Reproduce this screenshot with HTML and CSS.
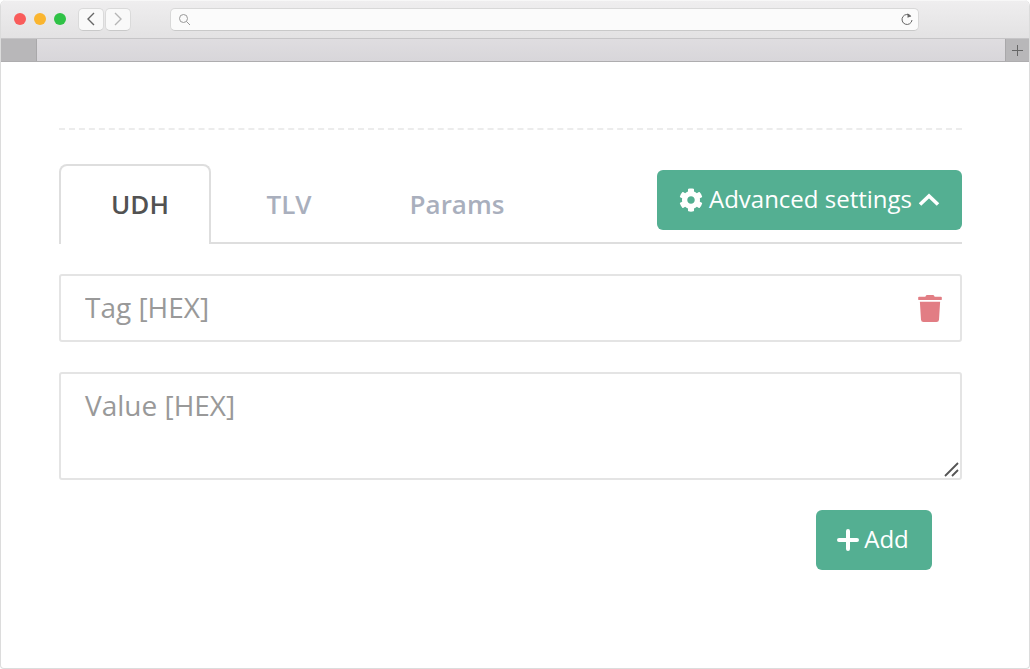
FILE: index.html
```html
<!DOCTYPE html>
<html lang="en">
<head>
<meta charset="utf-8">
<title>Advanced settings</title>
<link rel="stylesheet" href="styles.css">
</head>
<body>
<div class="window">
  <header class="toolbar">
    <div class="lights"><span class="light red"></span><span class="light yellow"></span><span class="light green"></span></div>
    <div class="nav">
      <span class="nav-btn"><svg width="10" height="16" viewBox="0 0 10 16"><path d="M8 2 2 8l6 6" fill="none" stroke="#666" stroke-width="1.400"/></svg></span>
      <span class="nav-btn"><svg width="10" height="16" viewBox="0 0 10 16"><path d="m2 2 6 6-6 6" fill="none" stroke="#b5b5b5" stroke-width="1.400"/></svg></span>
    </div>
    <div class="address">
      <svg width="13" height="13" viewBox="0 0 13 13"><circle cx="5.500" cy="5.500" r="4" fill="none" stroke="#999" stroke-width="1"/><path d="m8.500 8.500 3.500 3.500" stroke="#999" stroke-width="1"/></svg>
      <svg width="14" height="15" viewBox="0 0 14 15"><path d="M10.800 4.200A5 5 0 1 0 12 8" fill="none" stroke="#666" stroke-width="1"/><path d="M7.500 1.200l3.800 3-3.800 1.600z" fill="#666"/></svg>
    </div>
  </header>
  <div class="tabbar">
    <span class="tab-stub"></span>
    <span class="tab-add"><svg width="11" height="11" viewBox="0 0 11 11"><path d="M5.500 0v11M0 5.500h11" stroke="#666" stroke-width="1"/></svg></span>
  </div>
  <main class="content">
    <div class="dashed"></div>
    <div class="tabs-row">
      <nav class="tabs">
        <a class="tab active">UDH</a>
        <a class="tab tlv">TLV</a>
        <a class="tab params">Params</a>
      </nav>
      <button class="btn btn-advanced" type="button">
        <svg class="icon-gear" width="24" height="24" viewBox="0 0 512 512"><path fill="#fff" d="M487.400 315.700l-42.600-24.600c4.300-23.200 4.300-47 0-70.200l42.600-24.600c4.900-2.800 7.100-8.600 5.500-14-11.100-35.600-30-67.800-54.700-94.600-3.800-4.100-10-5.100-14.800-2.300L380.800 110c-17.900-15.400-38.500-27.300-60.800-35.100V25.800c0-5.600-3.900-10.500-9.400-11.700-36.700-8.200-74.300-7.800-109.200 0-5.500 1.200-9.400 6.100-9.400 11.700V75c-22.200 7.900-42.800 19.800-60.800 35.100L88.700 85.500c-4.900-2.800-11-1.900-14.800 2.300-24.700 26.700-43.600 58.900-54.700 94.600-1.700 5.400.6 11.200 5.500 14L67.300 221c-4.300 23.200-4.300 47 0 70.200l-42.600 24.600c-4.900 2.800-7.100 8.600-5.500 14 11.100 35.600 30 67.800 54.700 94.600 3.800 4.100 10 5.100 14.800 2.300l42.600-24.600c17.900 15.400 38.500 27.300 60.800 35.100v49.200c0 5.600 3.900 10.500 9.400 11.700 36.700 8.200 74.300 7.800 109.200 0 5.500-1.200 9.400-6.100 9.400-11.700v-49.200c22.200-7.900 42.800-19.800 60.800-35.100l42.600 24.600c4.900 2.800 11 1.900 14.800-2.300 24.700-26.700 43.600-58.900 54.700-94.600 1.500-5.500-.7-11.300-5.600-14.100zM256 336c-44.100 0-80-35.900-80-80s35.900-80 80-80 80 35.900 80 80-35.900 80-80 80z"/></svg>
        <span class="btn-label">Advanced settings</span>
        <svg width="22" height="14" viewBox="0 0 22 14"><path d="M2 11.500 11 3l9 8.500" fill="none" stroke="#fff" stroke-width="3.600"/></svg>
      </button>
    </div>
    <div class="field-wrap">
      <input class="field" type="text" placeholder="Tag [HEX]">
      <svg class="trash" width="24" height="27" viewBox="0 0 448 512"><path fill="#e27d84" d="M432 32H312l-9.400-18.700A24 24 0 0 0 281.100 0H166.800a23.720 23.720 0 0 0-21.400 13.300L136 32H16A16 16 0 0 0 0 48v32a16 16 0 0 0 16 16h416a16 16 0 0 0 16-16V48a16 16 0 0 0-16-16zM53.200 467a48 48 0 0 0 47.900 45h245.800a48 48 0 0 0 47.900-45L416 128H32z"/></svg>
    </div>
    <div class="area-wrap">
      <textarea class="area" placeholder="Value [HEX]"></textarea>
      <svg class="grip" width="15" height="15" viewBox="0 0 15 15"><path d="M1 14 14 1M8 14l6-6" stroke="#555" stroke-width="1.800"/></svg>
    </div>
    <div class="actions">
      <button class="btn btn-add" type="button">
        <svg width="22" height="22" viewBox="0 0 22 22"><path d="M11 2v18M2 11h18" stroke="#fff" stroke-width="4" stroke-linecap="round"/></svg>
        <span class="btn-label">Add</span>
      </button>
    </div>
  </main>
</div>
</body>
</html>
```
FILE: styles.css
```css
* { box-sizing: border-box; }
html, body { margin: 0; height: 100%; }
body { background: #fff; font-family: "Open Sans", "Liberation Sans", sans-serif; overflow: hidden; }
.window { width: 1030px; height: 669px; display: flex; flex-direction: column; background: #fff; border: 1px solid #dcdcdc; border-top: 0; border-radius: 6px 6px 4px 4px; overflow: hidden; }
.toolbar { height: 39px; flex: none; display: flex; align-items: center; padding: 0 110px 0 13px; background: linear-gradient(#efeeef, #e3e2e3); border-bottom: 1px solid #c6c5c7; box-shadow: inset 0 1px #f7f7f7; }
.lights { display: flex; gap: 8px; }
.light { width: 12px; height: 12px; border-radius: 50%; }
.red { background: #f95c5b; }
.yellow { background: #fab52f; }
.green { background: #2fc246; }
.nav { display: flex; margin-left: 12px; gap: 1px; }
.nav-btn { width: 26px; height: 23px; display: flex; align-items: center; justify-content: center; background: #f9f9f9; border: 1px solid #dadada; border-bottom-color: #c9c9c9; border-radius: 5px; }
.address { width: 750px; height: 23px; margin-left: 39px; display: flex; align-items: center; justify-content: space-between; padding: 0 4px 0 7px; background: #fbfbfb; border: 1px solid #d8d8d8; border-bottom-color: #c9c9c9; border-radius: 5px; }
.tabbar { height: 23px; flex: none; display: flex; justify-content: space-between; background: linear-gradient(#dfdde0, #d8d6da); border-bottom: 1px solid #aeadaf; }
.tab-stub { width: 36px; background: #b8b7b9; border-right: 1px solid #a9a8aa; }
.tab-add { width: 24px; display: flex; align-items: center; justify-content: center; background: #b8b7b9; border-left: 1px solid #a9a8aa; }
.content { flex: 1; padding: 66px 67px 0 58px; }
.dashed { border-top: 2px dashed #ececec; height: 2px; }
.tabs-row { margin-top: 34px; height: 80px; display: flex; justify-content: space-between; align-items: flex-start; border-bottom: 2px solid #dedede; }
.tabs { display: flex; height: 80px; }
.tab { display: flex; align-items: center; justify-content: center; font-size: 26px; font-weight: 600; color: #a9afbd; height: 80px; padding-bottom: 1px; }
.tab.active { width: 152px; padding: 0 0 3px 10px; color: #525252; background: #fff; border: 2px solid #dedede; border-bottom: 0; border-radius: 8px 8px 0 0; }
.tlv { width: 156px; }
.params { width: 180px; }
.btn { display: flex; align-items: center; justify-content: center; border: 0; border-radius: 6px; background: #54af92; color: #fff; font-family: inherit; font-size: 24px; height: 60px; padding: 0; }
.btn-label { position: relative; top: -2px; }
.btn-advanced { width: 305px; margin-top: 6px; gap: 6px; }
.icon-gear { margin: 0 0 1px; }
.btn-add { width: 116px; gap: 5px; padding-right: 2px; }
.field-wrap { position: relative; margin-top: 30px; }
.field { display: block; width: 100%; height: 68px; padding: 0 24px 2px; border: 2px solid #e4e4e4; border-radius: 3px; background: #fff; font-family: inherit; font-size: 28px; color: #555; outline: 0; }
.field::placeholder, .area::placeholder { color: #999; opacity: 1; }
.trash { position: absolute; right: 20px; top: 21px; }
.area-wrap { position: relative; margin-top: 30px; }
.area { display: block; width: 100%; height: 108px; padding: 11px 24px; border: 2px solid #e4e4e4; border-radius: 3px; background: #fff; font-family: inherit; font-size: 28px; line-height: 40px; color: #555; resize: none; outline: 0; }
.grip { position: absolute; right: 3px; bottom: 3px; }
.actions { display: flex; justify-content: flex-end; margin-top: 30px; padding-right: 30px; }
```
